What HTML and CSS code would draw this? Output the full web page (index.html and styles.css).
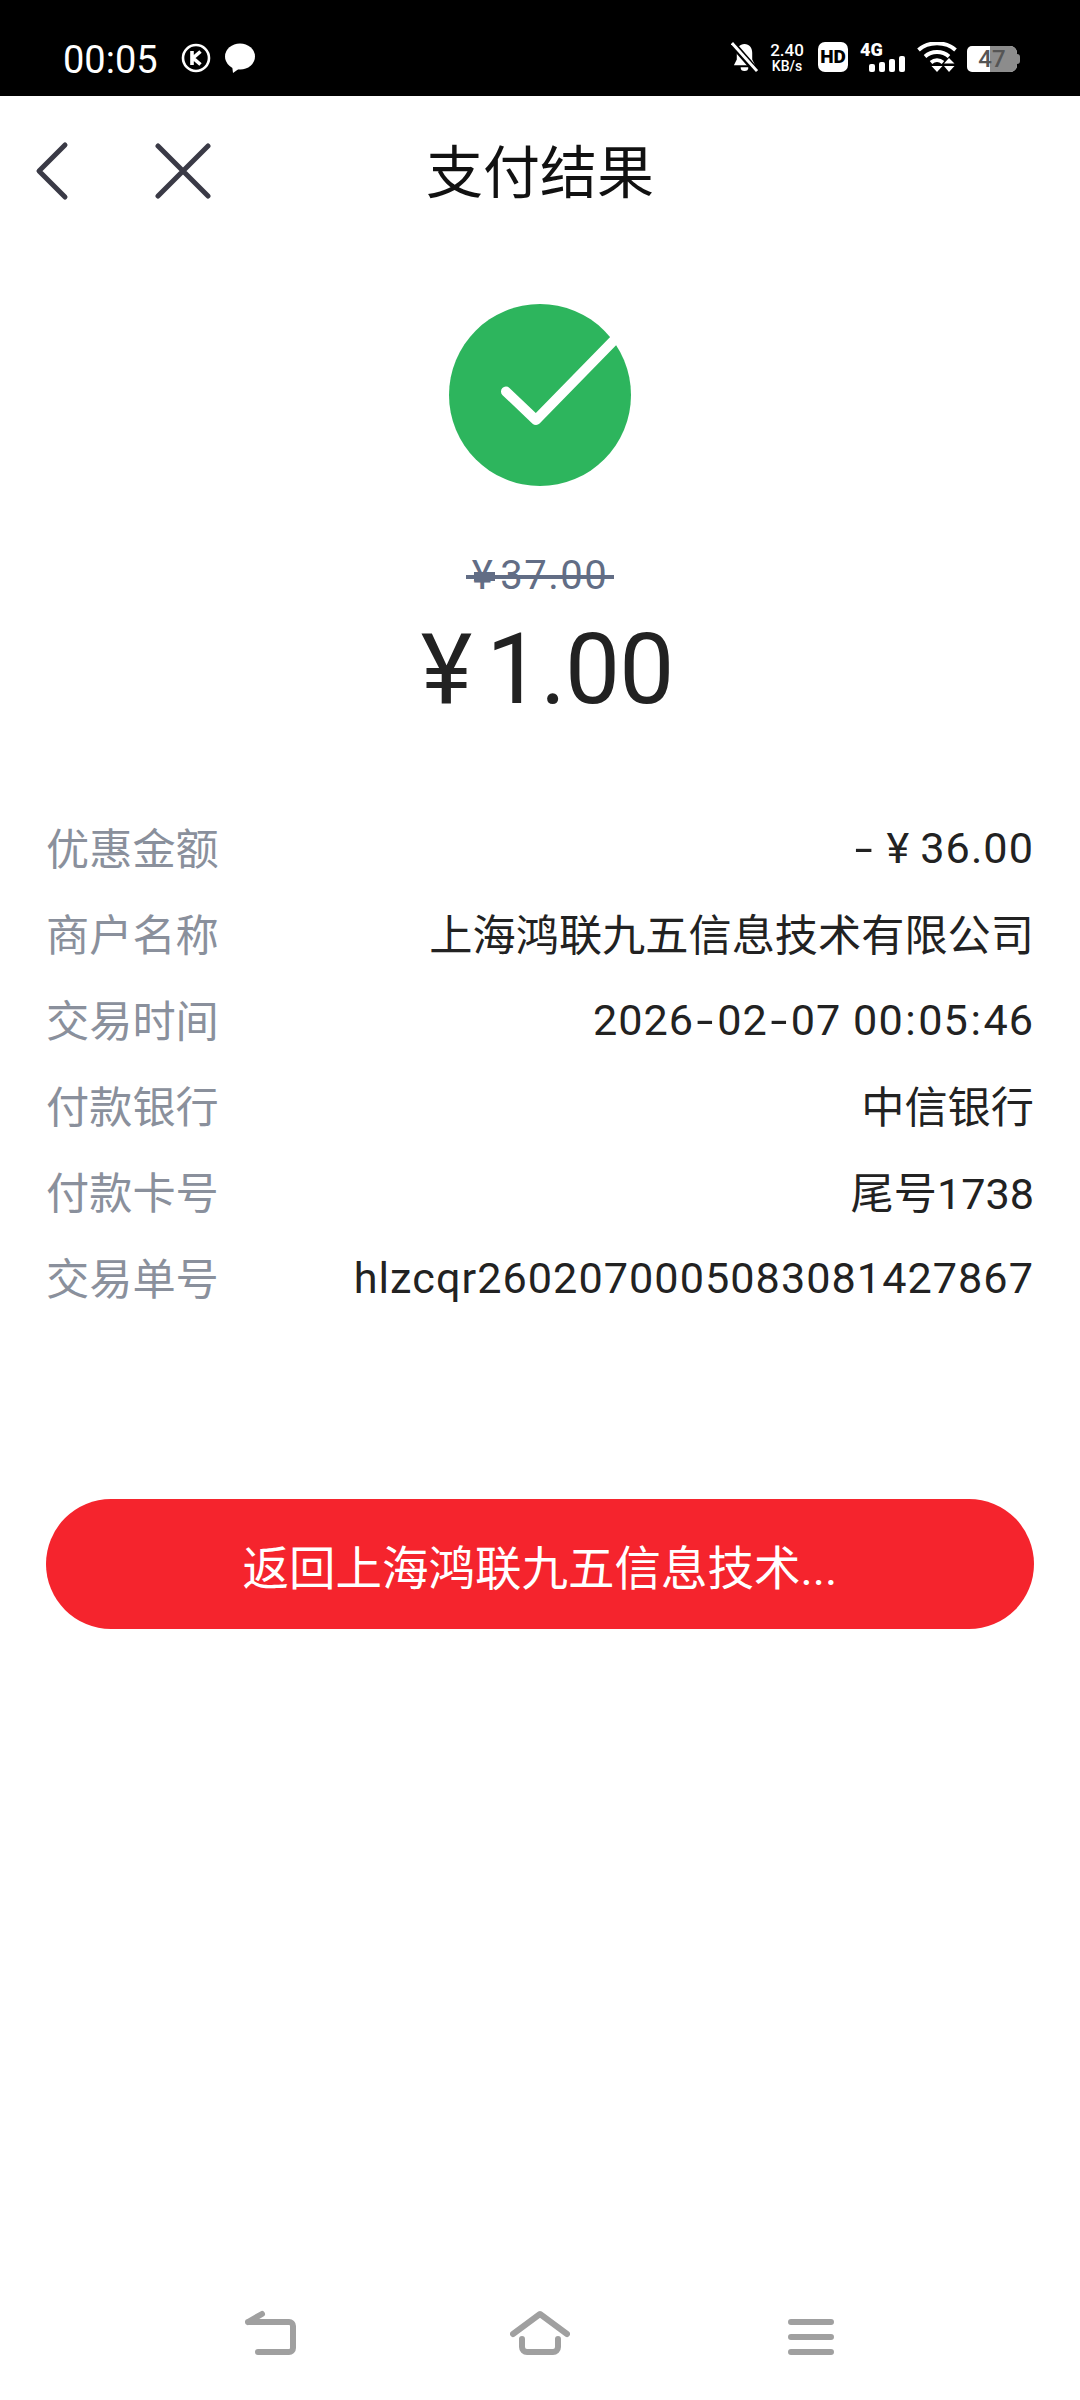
FILE: index.html
```
<!DOCTYPE html>
<html lang="zh-CN">
<head>
<meta charset="utf-8">
<title>支付结果</title>
<link rel="stylesheet" href="styles.css">
</head>
<body>
<div class="page">
  <header class="status">
    <div class="status-left">
      <span class="clock">00:05</span>
      <svg class="ic-k" viewBox="0 0 30 30"><circle cx="15" cy="15" r="13" fill="none" stroke="#fff" stroke-width="2.6"/><path d="M11 8v14M19.500 8.500 12 15l7.500 6.500" fill="none" stroke="#fff" stroke-width="3.600"/></svg>
      <svg class="ic-chat" viewBox="0 0 30 30"><ellipse cx="15" cy="13.500" rx="15" ry="13"/><path d="M7 22 8 30 15 25Z"/></svg>
    </div>
    <div class="status-right">
      <svg class="ic-bell" viewBox="0 0 28 32"><path d="M14 2c-5 0-8 4-8 9v7l-3 6h22l-3-6v-7c0-5-3-9-8-9Z" fill="#fff"/><path d="M10 26a4 4 0 0 0 8 0Z" fill="#fff"/><path d="M0 0 27 31" stroke="#000" stroke-width="7"/><path d="M1 1 27 30" stroke="#fff" stroke-width="3"/></svg>
      <div class="speed"><span class="speed-num">2.40</span><span class="speed-unit">KB/s</span></div>
      <span class="hd">HD</span>
      <div class="signal">
        <span class="four-g">4G</span>
        <div class="bars"><i class="bar bar-1"></i><i class="bar bar-2"></i><i class="bar bar-3"></i><i class="bar bar-4"></i></div>
      </div>
      <svg class="ic-wifi" viewBox="0 0 40 30"><path d="M1.500 8C11 -1 29 -1 38.500 8M8 14.500c6.500-6 17.500-6 24 0M14 20.500c3.500-3 8.500-3 12 0" fill="none" stroke="#fff" stroke-width="3.800"/><path d="M14.500 24h11L20 30ZM27 21.500 32 16l5.500 5.500ZM27 24h10.500L32 30Z" fill="#fff"/></svg>
      <div class="battery"><span class="battery-fill"></span><span class="battery-num">47</span><span class="battery-cap"></span></div>
    </div>
  </header>

  <nav class="nav">
    <div class="nav-icons">
      <svg class="ic-back" viewBox="0 0 36 60"><path d="M30 4 4 30l26 26" fill="none" stroke="#3a3a46" stroke-width="5" stroke-linecap="round" stroke-linejoin="round"/></svg>
      <svg class="ic-close" viewBox="0 0 56 56"><path d="M3 3l50 50M53 3 3 53" fill="none" stroke="#3a3a46" stroke-width="5" stroke-linecap="round"/></svg>
    </div>
    <h1 class="title">支付结果</h1>
    <div></div>
  </nav>

  <section class="result">
    <svg class="ic-success" viewBox="0 0 182 182"><circle cx="91" cy="91" r="91" fill="#2db55d"/><path d="M57 87.500 87 116 174 27" fill="none" stroke="#fff" stroke-width="10" stroke-linecap="round" stroke-linejoin="round"/></svg>
    <div class="old-price"><span class="old-yen">¥</span><span>37.00</span></div>
    <div class="price"><span class="yen">¥</span><span class="price-num">1.00</span></div>
  </section>

  <section class="details">
    <div class="row"><span class="label">优惠金额</span><span class="value num"><span class="minus">-</span><span class="row-yen">¥</span>36.00</span></div>
    <div class="row"><span class="label">商户名称</span><span class="value">上海鸿联九五信息技术有限公司</span></div>
    <div class="row"><span class="label">交易时间</span><span class="value num">2026<span class="dash">-</span>02<span class="dash">-</span>07 00<span class="colon">:</span>05<span class="colon">:</span>46</span></div>
    <div class="row"><span class="label">付款银行</span><span class="value">中信银行</span></div>
    <div class="row"><span class="label">付款卡号</span><span class="value">尾号1738</span></div>
    <div class="row"><span class="label">交易单号</span><span class="value num">hlzcqr2602070005083081427867</span></div>
  </section>

  <div class="action">
    <button class="btn" type="button">返回上海鸿联九五信息技术...</button>
  </div>

  <footer class="sysnav">
    <svg class="sys-back" viewBox="0 0 52 46"><path d="M3 12H44a4 4 0 0 1 4 4V38a4 4 0 0 1-4 4H13M3 12 17 4" fill="none" stroke="#a0a0a0" stroke-width="6" stroke-linecap="round" stroke-linejoin="round"/></svg>
    <svg class="sys-home" viewBox="0 0 60 46"><path d="M3 24 30 4l27 20" fill="none" stroke="#a0a0a0" stroke-width="6" stroke-linecap="round" stroke-linejoin="round"/><path d="M12 29v8a5 5 0 0 0 5 5h26a5 5 0 0 0 5-5v-8" fill="none" stroke="#a0a0a0" stroke-width="6" stroke-linecap="round"/></svg>
    <svg class="sys-menu" viewBox="0 0 46 46"><path d="M3 12h40M3 27h40M3 42h40" fill="none" stroke="#a0a0a0" stroke-width="6" stroke-linecap="round"/></svg>
  </footer>
</div>
</body>
</html>
```

FILE: styles.css
```
* { box-sizing: border-box; }
html, body { margin: 0; padding: 0; background: #fff; }
body { font-family: Roboto, "Noto Sans CJK SC", sans-serif; color: #222; }
.page { width: 1080px; height: 2400px; display: flex; flex-direction: column; overflow: hidden; }

.status { height: 96px; flex: none; background: #000; color: #fff; display: flex; justify-content: space-between; align-items: flex-start; padding: 42px 63px 0 63px; }
.status-left { display: flex; align-items: center; height: 32px; }
.clock { font-size: 38px; line-height: 32px; width: 96px; margin-top: 4px; }
.ic-k { width: 30px; height: 30px; margin-left: 22px; }
.ic-chat { width: 30px; height: 30px; margin-left: 14px; fill: #fff; }
.status-right { display: flex; align-items: flex-start; height: 32px; }
.ic-bell { width: 27px; height: 31px; }
.speed { display: flex; flex-direction: column; align-items: center; width: 40px; margin-left: 9px; }
.speed-num { font-size: 17px; line-height: 17px; font-weight: 500; }
.speed-unit { font-size: 14px; line-height: 14px; font-weight: 500; }
.hd { width: 30px; height: 30px; margin-left: 11px; background: #fff; color: #000; border-radius: 7px; font-size: 19px; line-height: 30px; font-weight: 900; text-align: center; }
.signal { width: 45px; margin-left: 12px; position: relative; height: 30px; }
.four-g { display: block; font-size: 18px; line-height: 16px; font-weight: 900; }
.bars { display: flex; align-items: flex-end; gap: 4px; height: 30px; position: absolute; left: 9px; top: 0; }
.bar { display: block; width: 6px; background: #fff; border-radius: 2px; }
.bar-1 { height: 8px; }
.bar-2 { height: 10px; }
.bar-3 { height: 13px; }
.bar-4 { height: 16px; }
.ic-wifi { width: 40px; height: 30px; margin-left: 12px; }
.battery { width: 50px; height: 26px; margin-left: 10px; margin-top: 4px; position: relative; background: #fff; border-radius: 5px 7px 7px 5px; color: #555; font-size: 24px; line-height: 26px; font-weight: 500; text-align: center; }
.battery-fill { position: absolute; left: 23px; right: 0; top: 0; bottom: 0; background: #8c8c8c; border-radius: 0 7px 7px 0; }
.battery-num { position: relative; }
.battery-cap { position: absolute; right: -3px; top: 8px; width: 3px; height: 10px; background: #8c8c8c; border-radius: 0 3px 3px 0; }

.nav { height: 156px; flex: none; display: grid; grid-template-columns: 1fr auto 1fr; align-items: center; padding: 0 0 6px; }
.nav-icons { display: flex; align-items: center; gap: 84px; padding-left: 35px; }
.ic-back { width: 36px; height: 60px; }
.ic-close { width: 56px; height: 56px; }
.title { margin: 0; padding-top: 5px; font-size: 57px; font-weight: 400; line-height: 70px; color: #111; }

.result { display: flex; flex-direction: column; align-items: center; padding-top: 52px; }
.ic-success { width: 182px; height: 182px; overflow: visible; }
.old-price { position: relative; margin-top: 65px; font-size: 40px; line-height: 50px; color: #626d85; letter-spacing: 1.5px; }
.old-price::after { content: ""; position: absolute; left: -6px; right: -6px; top: 24px; height: 4px; background: #626d85; }
.old-price::before { content: ""; position: absolute; left: 2px; top: 21px; width: 21px; height: 9px; background: #626d85; }
.old-yen { margin-right: 6px; }
.price { margin-top: 13px; padding-left: 14px; font-size: 98px; line-height: 112px; color: #222; }
.yen { margin-right: 14px; }
.price-num { letter-spacing: -1px; }

.details { padding: 0 46px; margin-top: 77px; }
.row { height: 86px; display: flex; justify-content: space-between; align-items: center; font-size: 43.2px; }
.label { color: #8a909c; }
.value { color: #222; }
.num { letter-spacing: 1.04px; padding-top: 5px; }
.minus { display: inline-block; transform: scaleX(1.5); margin: 0 16px 0 4px; }
.row-yen { margin-right: 10px; }
.dash { display: inline-block; transform: scaleX(1.4); margin: 0 5px; }
.colon { margin: 0 1.5px; }

.action { padding: 180px 46px 0; }
.btn { display: block; width: 100%; height: 130px; border: 0; border-radius: 65px; background: #f5242d; color: #fff; font: 400 46.5px Roboto, "Noto Sans CJK SC", sans-serif; }

.sysnav { margin-top: auto; height: 118px; flex: none; display: flex; justify-content: space-between; align-items: flex-start; padding: 28px 246px 0 245px; }
.sys-back { width: 52px; height: 46px; }
.sys-home { width: 60px; height: 46px; margin-right: 5px; }
.sys-menu { width: 46px; height: 46px; }
```
